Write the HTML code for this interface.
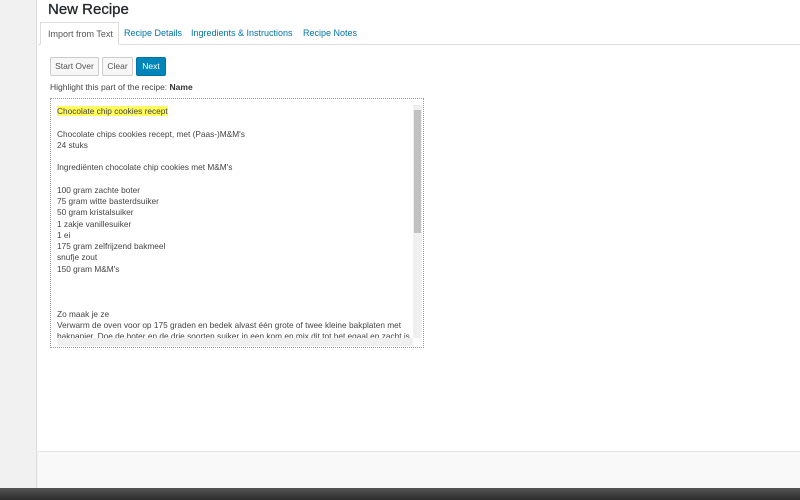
<!DOCTYPE html>
<html><head><style>
*{margin:0;padding:0;box-sizing:border-box}
body{width:800px;height:500px;overflow:hidden;background:#f1f1f1;font-family:"Liberation Sans",sans-serif;position:relative}
.left{position:absolute;left:0;top:0;width:37px;height:488px;background:#f1f1f1;border-right:1px solid #ddd}
.main{position:absolute;left:37px;top:0;width:763px;height:451px;background:#fff}
.foot{position:absolute;left:38px;top:451px;width:762px;height:37px;background:#f9f9f9;border-top:1px solid #e5e5e5}
.bar{position:absolute;left:0;top:488px;width:800px;height:12px;background:linear-gradient(#555,#2b2b2b)}
h1{position:absolute;left:48px;top:1px;font-size:15px;font-weight:normal;color:#23282d;-webkit-text-stroke:.3px #23282d}
.tabline{position:absolute;left:38px;top:44px;width:762px;border-top:1px solid #ddd}
.tab{position:absolute;top:22px;height:23px;font-size:9px;color:#0073aa;padding-top:6px}
.tab.a{left:40px;width:79px;background:#fff;border:1px solid #ddd;border-bottom:1px solid #fff;color:#555;padding-left:7px}
.btn{position:absolute;top:57px;height:19px;font-size:8.5px;border:1px solid #ccc;background:#f7f7f7;color:#555;border-radius:2px;text-align:center;line-height:17px}
.lbl{position:absolute;left:50px;top:82px;font-size:8.5px;color:#444}
.box{position:absolute;left:50px;top:98px;width:374px;height:250px;border:1px dotted #999;overflow:hidden}
.txt{position:absolute;left:6px;top:7px;font-size:8.3px;line-height:11.25px;color:#444;white-space:pre}
.hl{background:#fffb5c}
.vs{position:absolute;left:362px;top:6px;width:9px;height:233px;background:#f0f0f0}
.th{position:absolute;left:363px;top:11px;width:7px;height:123px;background:#c1c1c1}
.hs{position:absolute;left:6px;top:239px;width:356px;height:8px;background:#f0f0f0}
</style></head><body>
<div class="left"></div>
<div class="main"></div>
<div class="foot"></div>
<div class="bar"></div>
<h1>New Recipe</h1>
<div class="tabline"></div>
<div class="tab a">Import from Text</div>
<div class="tab" style="left:124px">Recipe Details</div>
<div class="tab" style="left:191px">Ingredients &amp; Instructions</div>
<div class="tab" style="left:303px">Recipe Notes</div>
<div class="btn" style="left:50px;width:49px">Start Over</div>
<div class="btn" style="left:102px;width:31px">Clear</div>
<div class="btn" style="left:136px;width:30px;background:#0085ba;border-color:#0073aa;color:#fff">Next</div>
<div class="lbl">Highlight this part of the recipe: <b style="color:#333">Name</b></div>
<div class="box">
<div class="txt"><span class="hl">Chocolate chip cookies recept</span>

Chocolate chips cookies recept, met (Paas-)M&amp;M's
24 stuks

Ingrediënten chocolate chip cookies met M&amp;M's

100 gram zachte boter
75 gram witte basterdsuiker
50 gram kristalsuiker
1 zakje vanillesuiker
1 ei
175 gram zelfrijzend bakmeel
snufje zout
150 gram M&amp;M's



Zo maak je ze
Verwarm de oven voor op 175 graden en bedek alvast één grote of twee kleine bakplaten met
bakpapier. Doe de boter en de drie soorten suiker in een kom en mix dit tot het egaal en zacht is</div>
<div class="vs"></div><div class="th"></div><div class="hs"></div>
</div>
</body></html>
